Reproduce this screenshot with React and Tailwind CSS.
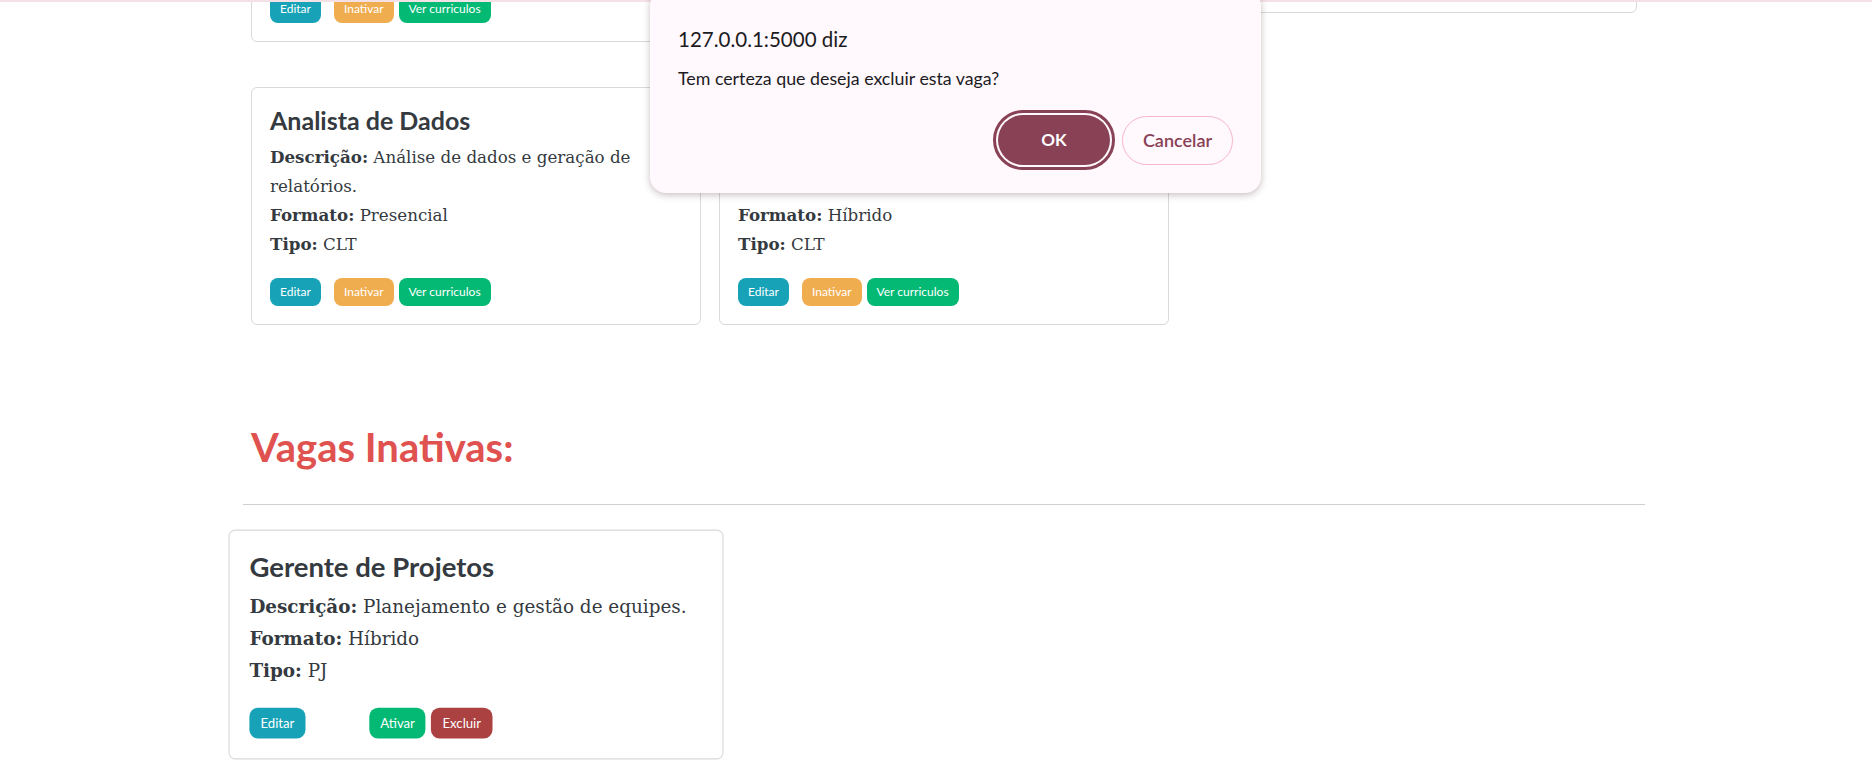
import React from "react";

const SANS = "font-['Lato','Segoe_UI',sans-serif]";
const SERIF = "font-['DejaVu_Serif',serif]";

function Btn({ color, children, className = "" }) {
  return (
    <span
      className={`inline-flex h-[28px] items-center rounded-[8px] px-[10px] text-[12px] leading-none text-white ${color} ${className}`}
    >
      {children}
    </span>
  );
}

function Card({ title, desc, formato, tipo, inactive = false, className = "" }) {
  return (
    <div className={`rounded-[6px] border border-[#d9d9d9] bg-white p-[18px] ${className}`}>
      <h3 className={`${SANS} mb-[8px] text-[25px] font-bold leading-[29px] text-[#343a40]`}>{title}</h3>
      <div className={`${SERIF} text-[16.7px] leading-[29px] text-[#343a40]`}>
        <p>
          <b>Descrição:</b> {desc}
        </p>
        <p>
          <b>Formato:</b> {formato}
        </p>
        <p>
          <b>Tipo:</b> {tipo}
        </p>
      </div>
      <div className={`${SANS} mt-[19px] flex`}>
        {inactive ? (
          <>
            <Btn color="bg-[#17a2b8]" className="mr-[58px]">Editar</Btn>
            <Btn color="bg-[#03b974]" className="mr-[5px]">Ativar</Btn>
            <Btn color="bg-[#ab4141]">Excluir</Btn>
          </>
        ) : (
          <>
            <Btn color="bg-[#17a2b8]" className="mr-[13px]">Editar</Btn>
            <Btn color="bg-[#efad4f]" className="mr-[5px]">Inativar</Btn>
            <Btn color="bg-[#03b974]">Ver curriculos</Btn>
          </>
        )}
      </div>
    </div>
  );
}

export default function App() {
  return (
    <div className="relative h-[773px] w-full overflow-hidden bg-white">
      <main className="ml-[243px] w-[1402px]">
        <div className="-mt-[196px] grid grid-cols-[repeat(3,450px)] items-start gap-x-[18px] gap-y-[45px] px-[8px]">
          <Card
            title="Desenvolvedor Back-end"
            desc="Desenvolvimento de APIs e integração de sistemas."
            formato="Remoto"
            tipo="PJ"
          />
          <Card
            title="Designer UX/UI"
            desc="Criação de interfaces e protótipos para aplicações web."
            formato="Remoto"
            tipo="CLT"
          />
          <Card
            title="Suporte Técnico"
            desc="Atendimento aos usuários."
            formato="Presencial"
            tipo="CLT"
          />
          <Card
            title="Analista de Dados"
            desc="Análise de dados e geração de relatórios."
            formato="Presencial"
            tipo="CLT"
          />
          <Card
            title="Desenvolvedor Front-end"
            desc="Desenvolvimento de interfaces com React e Tailwind."
            formato="Híbrido"
            tipo="CLT"
          />
        </div>

        <h2 className={`${SANS} mt-[98px] mb-[33px] px-[8px] text-[40px] font-bold leading-[1.2] text-[#e0524f]`}>
          Vagas Inativas:
        </h2>
        <hr className="border-0 border-t border-[#cfcfcf]" />

        <div className="mt-[35px] grid grid-cols-[repeat(3,450px)] items-start gap-x-[18px] px-[8px]">
          <Card
            title="Gerente de Projetos"
            desc="Planejamento e gestão de equipes."
            formato="Híbrido"
            tipo="PJ"
            inactive
            className="scale-110"
          />
        </div>
      </main>

      <div className="absolute left-0 right-0 top-0 h-[2px] bg-[#f3e1e5]" />

      <div
        className={`${SANS} absolute left-[650px] top-[-10px] flex h-[203px] w-[611px] flex-col rounded-[16px] bg-[#fff8fc] px-[28px] pt-[37px] shadow-[0_2px_7px_rgba(60,20,30,0.28)]`}
      >
        <div className="text-[20.5px] leading-[24px] text-[#1c1b1f]">127.0.0.1:5000 diz</div>
        <div className="mt-[15px] text-[17.8px] leading-[24px] text-[#1c1b1f]">
          Tem certeza que deseja excluir esta vaga?
        </div>
        <div className="mt-[25px] flex items-center justify-end gap-[12px]">
          <button className="h-[50px] w-[112px] rounded-full bg-[#884155] text-[17px] font-bold text-white outline-[3px] outline-offset-[2px] outline-solid outline-[#884155]">
            OK
          </button>
          <button className="h-[49px] w-[111px] rounded-full border-[1.5px] border-[#f7b6c7] bg-[#fff8fc] text-[18px] font-semibold text-[#884155]">
            Cancelar
          </button>
        </div>
      </div>
    </div>
  );
}
